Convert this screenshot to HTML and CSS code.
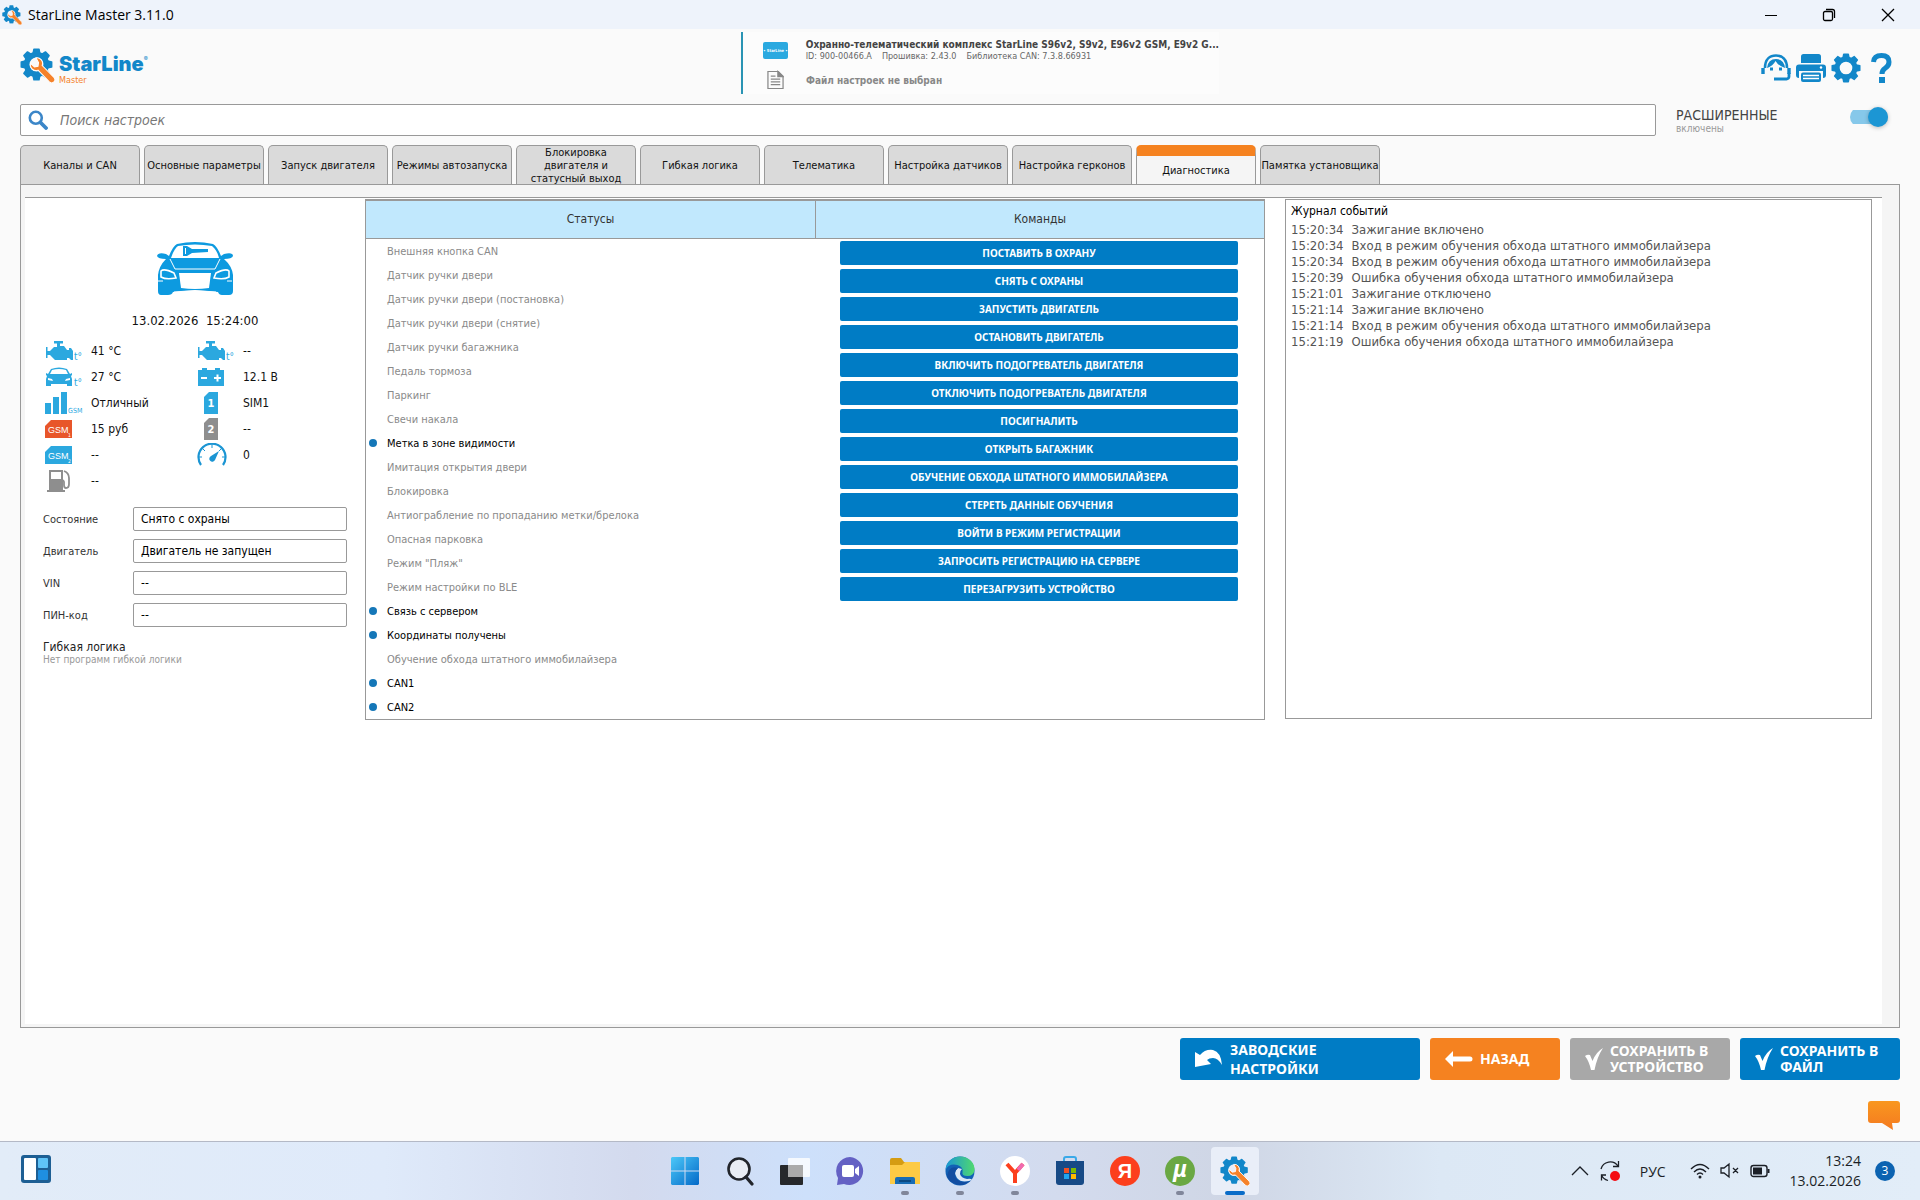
FILE: index.html
```html
<!DOCTYPE html>
<html lang="ru">
<head>
  <meta charset="UTF-8">
  <title>StarLine Master 3.11.0</title>
  <link rel="stylesheet" href="styles.css">
</head>
<body>
  <!-- Shared icons -->
  <svg class="sprite" aria-hidden="true">
    <symbol id="gear" viewBox="0 0 32 32">
      <circle cx="16" cy="16" r="9.5" fill="none" stroke="currentColor" stroke-width="5.5"/>
      <g fill="currentColor">
        <path id="tooth" d="M12 5 12.800 1Q13 .5 13.500 .5H18.500Q19 .5 19.200 1L20 5z"/>
        <use href="#tooth" transform="rotate(45 16 16)"/>
        <use href="#tooth" transform="rotate(90 16 16)"/>
        <use href="#tooth" transform="rotate(135 16 16)"/>
        <use href="#tooth" transform="rotate(180 16 16)"/>
        <use href="#tooth" transform="rotate(225 16 16)"/>
        <use href="#tooth" transform="rotate(270 16 16)"/>
        <use href="#tooth" transform="rotate(315 16 16)"/>
      </g>
    </symbol>
    <symbol id="logo" viewBox="0 0 34 34">
      <use href="#gear" width="32" height="32" color="#1287c9"/>
      <path d="M15.500 9.500a5.500 5.500 0 0 1 6 7.500L33 28.500a3 3 0 0 1-4.500 4.500L17.500 21.500a5.500 5.500 0 0 1-7.300-6.500l3.800 3.300 3.500-.6.500-3.600z" fill="#f5822a" stroke="#fff" stroke-width="1"/>
    </symbol>
    <symbol id="engine" viewBox="0 0 38 22">
      <path fill="#2ba8df" d="M9 1h9v2.500h-3V6h4l3 4h2V8h2l2 3v9h-2l-2-2h-2v2H10l-5-5H2.500v3H1V7h1.500v4H5l4-4h3V3.500H9z"/>
    </symbol>
    <symbol id="check" viewBox="0 0 18 22">
      <path fill="#fff" d="M0 8Q2.500 6 5 7L7.500 13Q11 4 18 0 12 9 9.500 22H6Q4 13 0 8z"/>
    </symbol>
  </svg>

  <header class="titlebar">
    <svg class="titlebar-icon"><use href="#logo"/></svg>
    <span class="titlebar-text">StarLine Master 3.11.0</span>
    <div class="window-buttons">
      <button aria-label="Свернуть"><svg width="14" height="14"><path d="M1 7.500h12" stroke="#000"/></svg></button>
      <button aria-label="Развернуть"><svg width="14" height="14" fill="none" stroke="#000" stroke-width="1.300"><rect x="1.500" y="3.500" width="9" height="9" rx="1.500"/><path d="M4 1.500h6.500a2 2 0 0 1 2 2V10"/></svg></button>
      <button aria-label="Закрыть"><svg width="14" height="14"><path d="M1 1l12 12M13 1 1 13" stroke="#000" stroke-width="1.300"/></svg></button>
    </div>
  </header>

  <div class="app">
    <!-- Logo, device and tools -->
    <div class="top">
      <div class="brand">
        <svg class="brand-icon"><use href="#logo"/></svg>
        <div class="brand-name">StarLine<sup>®</sup><small>Master</small></div>
      </div>
      <div class="device">
        <div class="device-row">
          <span class="device-pic">• StarLine •</span>
          <div class="device-info">
            <strong>Охранно-телематический комплекс StarLine S96v2, S9v2, E96v2 GSM, E9v2 G...</strong>
            <span>ID: 900-00466.A</span><span>Прошивка: 2.43.0</span><span>Библиотека CAN: 7.3.8.66931</span>
          </div>
        </div>
        <div class="device-row">
          <svg class="file-pic" viewBox="0 0 18 20" fill="none" stroke="#888" stroke-width="1.300"><path d="M1 1h11l5 5v13H1z"/><path d="M11.500 1v5.500H17z" fill="#888"/><path d="M4 6h5M4 9h10M4 12h10M4 15h10"/></svg>
          <strong class="file-name">Файл настроек не выбран</strong>
        </div>
      </div>
      <div class="tools">
        <button aria-label="Поддержка">
          <svg viewBox="0 0 30 30" fill="none" stroke="#1287c9"><path d="M4 15C4 6 9 2.500 15 2.500S26 6 26 15" stroke-width="2.600"/><path d="M2 15v6M28 15v6" stroke-width="3.400"/><path d="M28 20v3.500a2.500 2.500 0 0 1-2.500 2.500H13" stroke-width="2.800"/><path d="M6 15Q12 13 14.500 8q3 5 9.500 7-1-9-9-9T6 15z" fill="#1287c9" stroke="none"/><path d="M10.500 14.500v3M19.500 14.500v3" stroke-width="3"/></svg>
        </button>
        <button aria-label="Печать">
          <svg viewBox="0 0 30 30" fill="#1287c9"><path d="M5 10V3.500Q5 1 7.500 1h15Q25 1 25 3.500V10z"/><path d="M3 11.500h24a3 3 0 0 1 3 3V22a3 3 0 0 1-3 3V18H3v7a3 3 0 0 1-3-3v-7.500a3 3 0 0 1 3-3z"/><rect x="5" y="19.500" width="20" height="9.500" rx="2"/><path d="M7 22.500h16M7 25.500h16" stroke="#fff" stroke-width="1.500"/><circle cx="25" cy="14.500" r="1.200" fill="#fff"/></svg>
        </button>
        <button aria-label="Настройки"><svg color="#1287c9"><use href="#gear"/></svg></button>
        <button aria-label="Помощь">
          <svg viewBox="0 0 30 30"><path d="M7.500 9Q8 2.500 15.500 2.500T23 9q0 4-4 6.300-3 2-3 5.700" fill="none" stroke="#1287c9" stroke-width="5"/><path d="M13 24h6v6h-6z" fill="#1287c9"/></svg>
        </button>
      </div>
    </div>

    <div class="search-row">
      <label class="search">
        <svg viewBox="0 0 20 20" fill="none" stroke="#3b86c8" stroke-linecap="round"><circle cx="7.800" cy="7.800" r="6" stroke-width="2.600"/><path d="m13 13 5 5" stroke-width="3.800"/></svg>
        <input type="text" placeholder="Поиск настроек" aria-label="Поиск настроек">
      </label>
      <label class="advanced">
        <span>РАСШИРЕННЫЕ<small>включены</small></span>
        <input type="checkbox" class="toggle" checked>
      </label>
    </div>

    <nav class="tabs">
      <button>Каналы и CAN</button>
      <button>Основные параметры</button>
      <button>Запуск двигателя</button>
      <button>Режимы автозапуска</button>
      <button>Блокировка<br>двигателя и<br>статусный выход</button>
      <button>Гибкая логика</button>
      <button>Телематика</button>
      <button>Настройка датчиков</button>
      <button>Настройка герконов</button>
      <button class="active">Диагностика</button>
      <button>Памятка установщика</button>
    </nav>

    <main class="panel">
      <div class="content">
        <!-- Car state -->
        <section class="state">
          <svg class="car" viewBox="0 0 78 56">
            <path fill="#0d9ae0" d="M21 3Q39-1 57 3 61 5 65 15L68 13Q77 11 77 15 76 18 68 18 76 25 77 34V50Q77 54 73 54H66Q63 54 62 51 39 48 17 51 16 54 12 54H5Q2 54 2 50V34Q3 25 10 18 2 18 1 15 2 11 10 13L13 15Q17 5 21 3z"/>
            <path fill="#fff" d="M22 5Q39 2 56 5 61 9 63 17H15Q18 8 22 5z"/>
            <path fill="none" stroke="#fff" d="M14 18 19 28H59L64 18"/>
            <path fill="#fff" d="M23 32h32l-2 15q-14 2-28 0z"/>
            <path fill="#0d9ae0" stroke="#fff" stroke-width="1.600" d="M5 30Q8 27 18 32L20 37Q10 39 5 36zM73 30Q70 27 60 32L58 37Q68 39 73 36z"/>
            <path fill="none" stroke="#fff" d="M2 40h5M71 40h5M18 51q21-3 42 0"/>
            <path fill="#0d9ae0" d="M27 5h4l5 3h16v3l-16 1-5 3h-4z"/>
            <path fill="#fff" d="M29 7h1v6h-1z"/>
          </svg>
          <p class="date">13.02.2026&nbsp; 15:24:00</p>
          <dl class="stats">
            <div><dt><svg width="38" height="22"><use href="#engine"/><text x="29" y="20" class="icon-unit">t°</text></svg></dt><dd>41 °C</dd></div>
            <div><dt><svg width="38" height="22"><use href="#engine"/><text x="29" y="20" class="icon-unit">t°</text></svg></dt><dd>--</dd></div>
            <div><dt><svg width="38" height="22"><path fill="#2ba8df" d="M6 3Q14 0 22 3L25 8 27 7V9L26 10 27 13V20H22V18H6V20H1V13L2 10 1 9V7L3 8z"/><path fill="#fff" d="M7 4Q14 2 21 4L23 8H5z"/><path fill="#fff" d="M3 12l4 1 1 2-5-1zM25 12l-4 1-1 2 5-1z"/><text x="29" y="20" class="icon-unit">t°</text></svg></dt><dd>27 °C</dd></div>
            <div><dt><svg width="38" height="22"><path fill="#2ba8df" d="M1 4H5V2h5V4h8V2h5V4h4V20H1z"/><path d="M4 12h6M17 12h7M20.500 8.500v7" stroke="#fff" stroke-width="2"/></svg></dt><dd>12.1 В</dd></div>
            <div><dt><svg width="40" height="24"><path fill="#2ba8df" d="M0 12h6v11H0zM8 6h6v17H8zM16 1h6v22h-6z"/><text x="23" y="22" class="icon-gsm">GSM</text></svg></dt><dd>Отличный</dd></div>
            <div><dt><svg width="38" height="24"><path fill="#2ba8df" d="M12 1h9v22H7V6z"/><text x="14" y="16" class="icon-sim">1</text></svg></dt><dd>SIM1</dd></div>
            <div><dt><svg width="38" height="20"><path fill="#e8562a" d="M6 1h21v18H0V7z"/><text x="3" y="14" class="icon-card">GSM</text><text x="23" y="18" class="icon-index">1</text></svg></dt><dd>15 руб</dd></div>
            <div><dt><svg width="38" height="24"><path fill="#8e8e8e" d="M12 1h9v22H7V6z"/><text x="14" y="16" class="icon-sim">2</text></svg></dt><dd>--</dd></div>
            <div><dt><svg width="38" height="20"><path fill="#2ba8df" d="M6 1h21v18H0V7z"/><text x="3" y="14" class="icon-card">GSM</text><text x="23" y="18" class="icon-index">2</text></svg></dt><dd>--</dd></div>
            <div><dt><svg width="38" height="24"><path fill="none" stroke="#1b95d3" stroke-width="2.200" d="M4 22A13.500 13.500 0 1 1 26 22"/><path fill="none" stroke="#1b95d3" d="M15 1v4M5 5l3 3M25 5l-3 3M1 14h4M29 14h-4"/><path fill="#1b95d3" d="M22 8 18 17a3 3 0 1 1-4-4z"/></svg></dt><dd>0</dd></div>
            <div><dt><svg width="38" height="24"><path fill="#8e8e8e" d="M4 1h14v20h2v2H2v-2h2z"/><path fill="#fff" d="M6 3h10v7H6z"/><path fill="none" stroke="#8e8e8e" stroke-width="1.800" d="M19 2q5 2 5 7v6q0 4-3 4-2 0-2-3v-3l-1-2"/></svg></dt><dd>--</dd></div>
          </dl>
          <div class="fields">
            <label for="status">Состояние</label><input id="status" type="text" value="Снято с охраны" readonly>
            <label for="engine-state">Двигатель</label><input id="engine-state" type="text" value="Двигатель не запущен" readonly>
            <label for="vin">VIN</label><input id="vin" type="text" value="--" readonly>
            <label for="pin">ПИН-код</label><input id="pin" type="text" value="--" readonly>
          </div>
          <p class="logic">Гибкая логика<small>Нет программ гибкой логики</small></p>
        </section>

        <!-- Statuses and commands -->
        <section class="board">
          <div class="board-column">
            <h2>Статусы</h2>
            <ul class="statuses">
              <li>Внешняя кнопка CAN</li>
              <li>Датчик ручки двери</li>
              <li>Датчик ручки двери (постановка)</li>
              <li>Датчик ручки двери (снятие)</li>
              <li>Датчик ручки багажника</li>
              <li>Педаль тормоза</li>
              <li>Паркинг</li>
              <li>Свечи накала</li>
              <li class="on">Метка в зоне видимости</li>
              <li>Имитация открытия двери</li>
              <li>Блокировка</li>
              <li>Антиограбление по пропаданию метки/брелока</li>
              <li>Опасная парковка</li>
              <li>Режим "Пляж"</li>
              <li>Режим настройки по BLE</li>
              <li class="on">Связь с сервером</li>
              <li class="on">Координаты получены</li>
              <li>Обучение обхода штатного иммобилайзера</li>
              <li class="on">CAN1</li>
              <li class="on">CAN2</li>
            </ul>
          </div>
          <div class="board-column">
            <h2>Команды</h2>
            <div class="commands">
              <button>ПОСТАВИТЬ В ОХРАНУ</button>
              <button>СНЯТЬ С ОХРАНЫ</button>
              <button>ЗАПУСТИТЬ ДВИГАТЕЛЬ</button>
              <button>ОСТАНОВИТЬ ДВИГАТЕЛЬ</button>
              <button>ВКЛЮЧИТЬ ПОДОГРЕВАТЕЛЬ ДВИГАТЕЛЯ</button>
              <button>ОТКЛЮЧИТЬ ПОДОГРЕВАТЕЛЬ ДВИГАТЕЛЯ</button>
              <button>ПОСИГНАЛИТЬ</button>
              <button>ОТКРЫТЬ БАГАЖНИК</button>
              <button>ОБУЧЕНИЕ ОБХОДА ШТАТНОГО ИММОБИЛАЙЗЕРА</button>
              <button>СТЕРЕТЬ ДАННЫЕ ОБУЧЕНИЯ</button>
              <button>ВОЙТИ В РЕЖИМ РЕГИСТРАЦИИ</button>
              <button>ЗАПРОСИТЬ РЕГИСТРАЦИЮ НА СЕРВЕРЕ</button>
              <button>ПЕРЕЗАГРУЗИТЬ УСТРОЙСТВО</button>
            </div>
          </div>
        </section>

        <!-- Event log -->
        <section class="log">
          <h2>Журнал событий</h2>
          <ul>
            <li><time>15:20:34</time>Зажигание включено</li>
            <li><time>15:20:34</time>Вход в режим обучения обхода штатного иммобилайзера</li>
            <li><time>15:20:34</time>Вход в режим обучения обхода штатного иммобилайзера</li>
            <li><time>15:20:39</time>Ошибка обучения обхода штатного иммобилайзера</li>
            <li><time>15:21:01</time>Зажигание отключено</li>
            <li><time>15:21:14</time>Зажигание включено</li>
            <li><time>15:21:14</time>Вход в режим обучения обхода штатного иммобилайзера</li>
            <li><time>15:21:19</time>Ошибка обучения обхода штатного иммобилайзера</li>
          </ul>
        </section>
      </div>
    </main>

    <div class="actions">
      <button class="wide"><svg width="28" height="20"><path fill="#fff" d="M0 3 5 6Q10 0 18 1q8 2 9 15-4-7-9-7-4 0-6 2l4 4-16 3z"/></svg><span>ЗАВОДСКИЕ<br>НАСТРОЙКИ</span></button>
      <button class="back"><svg width="28" height="16"><path fill="#fff" d="M0 8 8 0V5.500H25a2 2 0 0 1 0 5H8V16z"/></svg><span>НАЗАД</span></button>
      <button class="save" disabled><svg width="18" height="22"><use href="#check"/></svg><span>СОХРАНИТЬ В<br>УСТРОЙСТВО</span></button>
      <button class="save"><svg width="18" height="22"><use href="#check"/></svg><span>СОХРАНИТЬ В<br>ФАЙЛ</span></button>
    </div>
    <div class="feedback">
      <button aria-label="Сообщение"><svg width="32" height="29"><defs><linearGradient id="orange" x2="0" y2="1"><stop stop-color="#f9971f"/><stop offset="1" stop-color="#f47a20"/></linearGradient></defs><path fill="url(#orange)" d="M3 0H29a3 3 0 0 1 3 3V19a3 3 0 0 1-3 3H24L25 29 14 22H3a3 3 0 0 1-3-3V3a3 3 0 0 1 3-3z"/></svg></button>
    </div>
  </div>

  <footer class="taskbar">
    <div class="taskbar-left">
      <button aria-label="Виджеты"><svg width="32" height="30"><rect x="1" y="1" width="30" height="28" rx="3" fill="#1d5f94"/><rect x="4" y="4" width="12" height="22" rx="1" fill="#fff"/><rect x="18" y="4" width="10" height="10" rx="1" fill="#5fc3f7"/><rect x="18" y="16" width="10" height="10" rx="1" fill="#1f8fe0"/></svg></button>
    </div>
    <div class="taskbar-apps">
      <button aria-label="Пуск"><svg viewBox="0 0 30 30"><defs><linearGradient id="win" x2="1" y2="1"><stop stop-color="#4cc8f8"/><stop offset="1" stop-color="#0469c8"/></linearGradient></defs><path fill="url(#win)" d="M2 1H14.500V14.500H1V2zM15.500 1H28L29 2V14.500H15.500zM1 15.500H14.500V29H2L1 28zM15.500 15.500H29V28L28 29H15.500z"/></svg></button>
      <button aria-label="Поиск"><svg viewBox="0 0 30 30"><circle cx="14" cy="13" r="10.500" fill="#e9edf4" stroke="#22252b" stroke-width="2.600"/><path d="m21 21 6 7" stroke="#22252b" stroke-width="3.200" stroke-linecap="round"/></svg></button>
      <button aria-label="Представление задач"><svg viewBox="0 0 30 30"><rect y="9" width="23" height="20" rx="1" fill="#26282b"/><rect x="8" y="2" width="22" height="19" rx="1" fill="#fff" fill-opacity=".8"/><path d="M8 9h15v12H8z" fill="#aaa"/></svg></button>
      <button aria-label="Чат"><svg viewBox="0 0 30 30"><path d="M15 1a14 14 0 1 1-6 27l-7 1 1-7A14 14 0 0 1 15 1z" fill="#6461c4"/><rect x="7" y="9" width="12" height="12" rx="2" fill="#fff"/><path d="m20 13 4-3v10l-4-3z" fill="#fff"/></svg></button>
      <button aria-label="Проводник" class="running"><svg viewBox="0 0 30 30"><path d="M0 4q0-2 2-2h9l3 4h14q2 0 2 2v4H0z" fill="#d59c12"/><path d="M0 9h12l3-3h15v22H0z" fill="#fcca45"/><path d="M5 28v-5q0-2 2-2h16q2 0 2 2v5z" fill="#176cb5"/><path d="M9 25h12" stroke="#0b4a83" stroke-width="2"/></svg></button>
      <button aria-label="Edge" class="running"><svg viewBox="0 0 30 30"><defs><linearGradient id="edge" x2="1"><stop stop-color="#1996d5"/><stop offset="1" stop-color="#50d96e"/></linearGradient></defs><circle cx="15" cy="15" r="14.500" fill="#1261b5"/><path d="M.500 14C1 5 8 .500 15 .500 25 .500 30 8 29.500 14q-1 6-7 6-6 0-5-4 1-5-5-7Q4 7 .500 14z" fill="url(#edge)"/><path d="M13 12q-5 4-1 10 5 6 15 2-1-2-5-1-6-1-7-5-.500-3 2-5z" fill="#dce7f6"/><path d="M2 20Q4 9 13 12q-5 4-2 10 4 6 14 3Q17 32 8 27 3 24 2 20z" fill="#124da1"/></svg></button>
      <button aria-label="Яндекс Браузер" class="running"><svg viewBox="0 0 30 30"><circle cx="15" cy="15" r="15" fill="#fff"/><path d="m7 8 8 9v10M23 8l-8 9" fill="none" stroke="#fc3f1d" stroke-width="4"/><path d="m23 8-5 6" stroke="#f06ab0" stroke-width="4"/></svg></button>
      <button aria-label="Store"><svg viewBox="0 0 30 30"><path d="M9 6V3q0-2 2-2h8q2 0 2 2v3" fill="none" stroke="#3aa9e8" stroke-width="2"/><path d="M1 5h28v21q0 3-3 3H4q-3 0-3-3z" fill="#174a86"/><path d="M9 12h5v5H9z" fill="#f25022"/><path d="M16 12h5v5h-5z" fill="#7fba00"/><path d="M9 18h5v5H9z" fill="#21a5ef"/><path d="M16 18h5v5h-5z" fill="#ffb900"/></svg></button>
      <button aria-label="Яндекс"><svg viewBox="0 0 30 30"><circle cx="15" cy="15" r="15" fill="#fc3f1d"/><text x="15" y="22" text-anchor="middle" class="app-letter">Я</text></svg></button>
      <button aria-label="uTorrent" class="running"><svg viewBox="0 0 30 30"><circle cx="15" cy="15" r="15" fill="#6aa843"/><text x="15" y="21" text-anchor="middle" class="app-mu">µ</text></svg></button>
      <button aria-label="StarLine Master" class="current"><svg viewBox="0 0 34 34"><use href="#logo"/></svg></button>
    </div>
    <div class="tray">
      <button aria-label="Скрытые значки"><svg width="18" height="20" fill="none" stroke="#1b1f26" stroke-width="1.300"><path d="m1 14 8-8 8 8"/></svg></button>
      <button aria-label="Обновление"><svg width="20" height="22" fill="none" stroke="#1b1f26" stroke-width="1.300"><path d="M1 9A9.500 9.500 0 0 1 18 6M18.500 1v5.500H13M8 20.500Q3 19 1.500 15M1.500 20.500V15H6"/><circle cx="15" cy="16" r="5" fill="#f40b12" stroke="none"/></svg></button>
      <button class="lang">РУС</button>
      <button class="network" aria-label="Сеть, звук, батарея">
        <svg width="20" height="18" fill="none" stroke="#1b1f26" stroke-width="1.400"><path d="M1 7q9-9 18 0M4 10q6-6 12 0M7 12.500q3-3 6 0"/><circle cx="10" cy="15" r="1.500" fill="#1b1f26" stroke="none"/></svg>
        <svg width="20" height="18" fill="none" stroke="#1b1f26" stroke-width="1.300"><path d="M1 6h3l5-4v13l-5-4H1zM13 6l5 5M18 6l-5 5"/></svg>
        <svg width="20" height="18" fill="none" stroke="#1b1f26" stroke-width="1.400"><rect x="1" y="3.500" width="16" height="11" rx="2.500"/><path d="M3 5.500h9v7H3z" fill="#1b1f26" stroke="none"/><path d="M18.500 7v4" stroke-width="2"/></svg>
      </button>
      <div class="clock">13:24<br>13.02.2026</div>
      <span class="badge">3</span>
    </div>
  </footer>
</body>
</html>
```
FILE: styles.css
```css
/* Global */
* {
  box-sizing: border-box;
}
body {
  margin: 0;
  min-height: 100vh;
  display: flex;
  flex-direction: column;
  background: #fafafa;
  color: #222;
  font-family: Tahoma, "DejaVu Sans Condensed", "DejaVu Sans", sans-serif;
  font-size: 11px;
}
h2, p, ul, dl, dd {
  margin: 0;
  padding: 0;
}
ul {
  list-style: none;
}
button {
  border: 0;
  padding: 0;
  background: none;
  color: inherit;
  font: inherit;
  cursor: pointer;
}
svg {
  display: block;
  flex: none;
}
.sprite {
  position: absolute;
  width: 0;
  height: 0;
}

/* Title bar */
.titlebar {
  height: 29px;
  display: flex;
  align-items: center;
  gap: 6px;
  padding: 0 2px;
  background: #eef3fb;
  color: #000;
  font-family: "Open Sans", "Noto Sans", sans-serif;
  font-size: 14px;
}
.titlebar-icon {
  width: 20px;
  height: 20px;
}
.window-buttons {
  margin-left: auto;
  display: flex;
}
.window-buttons button {
  width: 58px;
  height: 28px;
  display: flex;
  align-items: center;
  justify-content: center;
}
.window-buttons button:last-child {
  width: 60px;
}

/* Application */
.app {
  flex: 1;
  display: flex;
  flex-direction: column;
  padding: 0 20px;
}
.top {
  height: 75px;
  display: grid;
  grid-template-columns: 721fr 478px 681fr;
  padding-top: 3px;
  align-items: start;
}
.brand {
  display: flex;
  gap: 4px;
  padding-top: 16px;
}
.brand-icon {
  width: 35px;
  height: 35px;
}
.brand-name {
  color: #1287c9;
  font: 900 20px/22px Inter, "Liberation Sans", sans-serif;
  padding-top: 5px;
}
.brand-name sup {
  font-size: 6px;
  font-weight: 400;
  line-height: 6px;
  vertical-align: 10px;
}
.brand-name small {
  display: block;
  color: #f5822a;
  font: 9px/10px "DejaVu Sans Condensed", "DejaVu Sans", sans-serif;
}
.device {
  height: 62px;
  border-left: 2px solid #2a94b4;
  background: #fcfcfc;
  padding: 6px 0 0 20px;
}
.device-row {
  display: flex;
  align-items: center;
  height: 24px;
}
.device-row + .device-row {
  margin-top: 6px;
}
.device-pic {
  width: 25px;
  height: 17px;
  border-radius: 2px;
  background: #2aa9e0;
  color: #fff;
  font-size: 4px;
  font-weight: bold;
  line-height: 17px;
  text-align: center;
  white-space: nowrap;
  margin-right: 18px;
}
.device-info {
  font-size: 9px;
  line-height: 11px;
  color: #666;
  white-space: nowrap;
}
.device-info strong {
  display: block;
  font-size: 10px;
  line-height: 12px;
  color: #444;
}
.device-info span {
  margin-right: 10px;
}
.file-pic {
  width: 17px;
  height: 20px;
  margin: 0 22px 0 4px;
}
.file-name {
  font-size: 10px;
  color: #888;
}
.tools {
  justify-self: end;
  display: flex;
  gap: 5px;
  padding: 21px 4px 0 0;
}
.tools svg {
  width: 30px;
  height: 30px;
}

/* Search */
.search-row {
  display: flex;
  gap: 20px;
}
.search {
  flex: 1;
  height: 32px;
  display: flex;
  align-items: center;
  gap: 10px;
  padding-left: 7px;
  border: 1px solid #999;
  border-radius: 2px;
  background: #fff;
}
.search svg {
  width: 20px;
  height: 20px;
}
.search input {
  flex: 1;
  border: 0;
  outline: 0;
  background: none;
  font: inherit;
  font-size: 14px;
  font-style: italic;
}
.search input::placeholder {
  color: #777;
}
.advanced {
  width: 224px;
  display: flex;
  justify-content: space-between;
  font-size: 14px;
  line-height: 16px;
  color: #444;
  padding: 3px 12px 0 0;
}
.advanced small {
  display: block;
  font-size: 10px;
  line-height: 12px;
  color: #999;
}
.toggle {
  appearance: none;
  width: 38px;
  height: 20px;
  margin: 0;
  display: flex;
  justify-content: flex-end;
  background: linear-gradient(#86c8ea, #86c8ea) center / 38px 14px no-repeat;
  border-radius: 10px;
}
.toggle::after {
  content: "";
  width: 20px;
  height: 20px;
  border-radius: 50%;
  background: #1c96d4;
  box-shadow: 0 1px 4px rgba(0,0,0,0.25);
}

/* Tabs */
.tabs {
  display: flex;
  gap: 4px;
  margin-top: 9px;
}
.tabs button {
  width: 120px;
  height: 39px;
  overflow: hidden;
  border: 1px solid #999;
  border-bottom: 0;
  border-radius: 5px 5px 0 0;
  background: #dadada;
  color: #111;
  line-height: 13px;
  white-space: nowrap;
}
.tabs .active {
  border-top: 11px solid #f58220;
  background: #f5f5f5;
}

/* Panel */
.panel {
  flex: 1;
  display: flex;
  border: 1px solid #999;
  background: #f5f5f5;
  padding: 12px 17px 3px 4px;
}
.content {
  flex: 1;
  display: grid;
  grid-template-columns: 340px 900fr 607fr;
  align-items: start;
  border-top: 1px solid #999;
  background: #fff;
  padding: 1px 10px 0 0;
}

/* Car state */
.state {
  padding: 42px 18px 0;
}
.car {
  width: 78px;
  height: 56px;
  margin: 0 auto;
}
.date {
  margin: 15px 0 8px;
  text-align: center;
  font-size: 13px;
  line-height: 18px;
  color: #111;
}
.stats {
  display: grid;
  grid-template-columns: 152px 1fr;
  padding-left: 2px;
  font-size: 12px;
  color: #111;
}
.stats div {
  height: 26px;
  display: flex;
  align-items: center;
}
.stats dt {
  width: 46px;
}
.icon-unit {
  font-size: 10px;
  fill: #2ba8df;
}
.icon-gsm {
  font-size: 7px;
  fill: #2ba8df;
}
.icon-sim {
  text-anchor: middle;
  font-size: 11px;
  font-weight: bold;
  fill: #fff;
}
.icon-card {
  font: 9px "Liberation Sans", sans-serif;
  fill: #fff;
}
.icon-index {
  font-size: 5px;
  fill: #fff;
}
.fields {
  display: grid;
  grid-template-columns: 90px 1fr;
  gap: 8px 0;
  align-items: center;
  margin-top: 13px;
}
.fields label {
  color: #333;
}
.fields input {
  width: 100%;
  height: 24px;
  padding: 0 7px;
  border: 1px solid #999;
  border-radius: 2px;
  color: #000;
  font: inherit;
  font-size: 12px;
}
.logic {
  margin-top: 13px;
  font-size: 12px;
  line-height: 14px;
}
.logic small {
  display: block;
  font-size: 10px;
  line-height: 11px;
  color: #999;
}

/* Statuses and commands */
.board {
  display: grid;
  grid-template-columns: 1fr 1fr;
  border: 1px solid #999;
}
.board h2 {
  height: 39px;
  border: solid #999;
  border-width: 1px 0;
  background: #c1e8fd;
  color: #333;
  font-size: 12px;
  font-weight: normal;
  line-height: 37px;
  text-align: center;
}
.board-column + .board-column h2 {
  border-left: 1px solid #999;
}
.statuses li {
  height: 24px;
  display: flex;
  align-items: center;
  padding-left: 21px;
  color: #8a8a8a;
}
.statuses .on {
  padding-left: 3px;
  color: #000;
}
.on::before {
  content: "";
  width: 8px;
  height: 8px;
  border-radius: 50%;
  background: #1577b8;
  margin-right: 10px;
}
.commands {
  display: grid;
  gap: 4px;
  padding: 2px 26px 0 25px;
}
.commands button {
  height: 24px;
  border-radius: 2px;
  background: #007cc5;
  color: #fff;
  font: bold 10px "Noto Sans", "Open Sans", sans-serif;
}

/* Event log */
.log {
  align-self: stretch;
  margin-left: 20px;
  border: 1px solid #999;
  padding: 3px 5px;
  height: 520px;
  color: #555;
  font-size: 13px;
  line-height: 16px;
}
.log h2 {
  color: #000;
  font-size: 12px;
  font-weight: normal;
  margin-bottom: 3px;
}
.log time {
  margin-right: 8px;
}

/* Bottom buttons */
.actions {
  display: flex;
  justify-content: flex-end;
  gap: 10px;
  margin-top: 10px;
}
.actions button {
  height: 42px;
  display: flex;
  align-items: center;
  gap: 7px;
  padding-left: 15px;
  border-radius: 3px;
  background: #007cc5;
  color: #fff;
  font: bold 14px/16px "Noto Sans", "Open Sans", sans-serif;
  text-align: left;
}
.actions .wide {
  width: 240px;
  line-height: 19px;
}
.actions .back {
  width: 130px;
  background: #f58220;
}
.actions .save {
  width: 160px;
}
.actions button:disabled {
  background: #a8a8a8;
}
.feedback {
  display: flex;
  justify-content: flex-end;
  padding: 21px 0 11px;
}

/* Taskbar */
.taskbar {
  height: 59px;
  display: grid;
  grid-template-columns: 1fr auto 1fr;
  align-items: center;
  border-top: 1px solid #b4b9c6;
  background: linear-gradient(90deg, #e2ecf8 0%, #dfeafa 20%, #d3daee 33%, #cde0fb 42%, #d3dbee 55%, #cfd6e5 64%, #dce8f5 75%, #e2edf8 100%);
  color: #1b1f26;
  font-family: "Open Sans", "Noto Sans", sans-serif;
  font-size: 14px;
}
.taskbar-left {
  padding-left: 20px;
}
.taskbar-apps {
  display: flex;
  gap: 7px;
}
.taskbar-apps button {
  width: 48px;
  height: 48px;
  display: flex;
  flex-direction: column;
  align-items: center;
  justify-content: center;
  border-radius: 4px;
  position: relative;
}
.taskbar-apps svg {
  width: 30px;
  height: 30px;
}
.taskbar-apps .current {
  background: #e9eef8;
}
.running::after,
.current::after {
  content: "";
  position: absolute;
  bottom: 0;
  width: 8px;
  height: 4px;
  border-radius: 2px;
  background: #80869a;
}
.current::after {
  width: 20px;
  background: #0a6cc8;
}
.app-letter {
  font: bold 20px "Liberation Sans", sans-serif;
  fill: #fff;
}
.app-mu {
  font: bold italic 24px "Liberation Sans", sans-serif;
  fill: #fff;
}
.tray {
  justify-self: end;
  display: flex;
  align-items: center;
  padding-right: 25px;
}
.tray > button:first-child {
  margin-right: 11px;
}
.lang {
  margin: 0 24px 0 20px;
}
.network {
  display: flex;
  gap: 10px;
}
.clock {
  margin: 0 14px 0 20px;
  text-align: right;
  line-height: 20px;
}
.badge {
  width: 20px;
  height: 20px;
  border-radius: 50%;
  background: #0c63b1;
  color: #fff;
  font-size: 12px;
  line-height: 20px;
  text-align: center;
}
```
